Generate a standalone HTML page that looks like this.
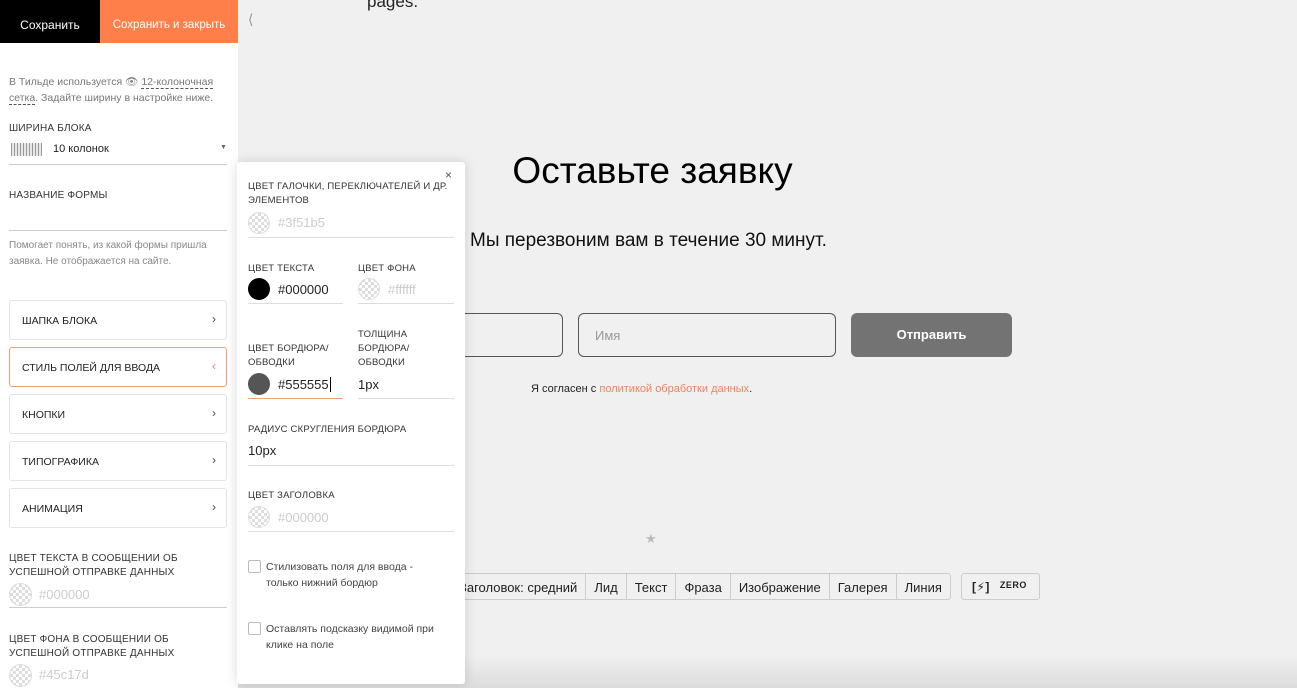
<!DOCTYPE html>
<html><head><meta charset="utf-8"><style>
*{box-sizing:border-box;margin:0;padding:0}
body{width:1297px;height:688px;overflow:hidden;background:#f0f0f0;font-family:"Liberation Sans","DejaVu Sans",sans-serif;position:relative;color:#000}
.a{position:absolute}
.left{position:absolute;left:0;top:0;width:238px;height:688px;background:#fff}
.lbl{font-size:10px;color:#333;letter-spacing:.2px;line-height:14px;text-transform:uppercase}
.chk{display:inline-block;border-radius:50%;background:repeating-conic-gradient(#ddd 0 25%,#fff 0 50%) 0 0/6px 6px;border:1px solid #ddd}
.line{position:absolute;height:1px;background:#ddd}
.menu{position:absolute;left:9px;width:218px;height:40px;border:1px solid #e4e4e4;border-radius:3px;font-size:10.5px;color:#222;padding:14px 12px;text-transform:uppercase}
.menu span{position:absolute;right:10px;top:11px;font-size:12px;color:#444}
.pop{position:absolute;left:237px;top:162px;width:228px;height:522px;background:#fff;border-radius:3px;box-shadow:0 0 12px rgba(0,0,0,.15)}
.val{font-size:13px;color:#222}
.ph{font-size:13px;color:#ccc}
.tb{position:absolute;top:573px;height:27px;border:1px solid #ccc;border-radius:3px;background:#f0f0f0;font-size:13px;color:#222;display:flex}
.tb div{padding:6px 8px;border-right:1px solid #ccc}
.tb div:last-child{border-right:0}
.cb{position:absolute;width:13px;height:13px;border:1px solid #bbb;border-radius:2px}
</style></head><body>
<div class="a" style="left:367px;top:-8px;font-size:17px;color:#222">pages.</div>
<div class="a" style="left:248px;top:11px;font-size:14px;color:#999">⟨</div>
<div class="a" style="left:0;top:0;width:1297px;text-align:center;top:150px;font-size:37px;color:#000;padding-left:8px">Оставьте заявку</div>
<div class="a" style="left:470px;top:230px;font-size:19px;color:#111">Мы перезвоним вам в течение 30 минут.</div>
<div class="a" style="left:440px;top:313px;width:123px;height:44px;border:1px solid #555;border-radius:6px"></div>
<div class="a" style="left:578px;top:313px;width:258px;height:44px;border:1px solid #555;border-radius:6px;font-size:13px;color:#999;padding:14px 16px">Имя</div>
<div class="a" style="left:851px;top:313px;width:161px;height:44px;background:#737373;border-radius:6px;color:#fff;font-weight:bold;font-size:13px;text-align:center;line-height:44px">Отправить</div>
<div class="a" style="left:531px;top:383px;font-size:11px;color:#222">Я согласен с <span style="color:#f0825a">политикой обработки данных</span>.</div>
<div class="a" style="left:645px;top:531px;font-size:13px;color:#bbb">★</div>
<div class="tb" style="left:450px"><div>Заголовок: средний</div><div>Лид</div><div>Текст</div><div>Фраза</div><div>Изображение</div><div>Галерея</div><div>Линия</div></div>
<div class="tb" style="left:961px;width:79px;font-size:9px;font-weight:bold;padding:6px 10px;letter-spacing:.5px"><b style="font-size:12px;margin-right:10px">[⚡]</b>ZERO</div>
<div class="a" style="left:238px;top:655px;width:1059px;height:33px;background:linear-gradient(#f0f0f0,#dcdcdc)"></div>

<div class="left">
<div class="a" style="left:0;top:0;width:100px;height:43px;background:#000;color:#fff;font-size:12px;text-align:center;line-height:50px">Сохранить</div>
<div class="a" style="left:100px;top:0;width:138px;height:43px;background:#ff7f4a;color:#fff;font-size:11.5px;text-align:center;line-height:50px">Сохранить и закрыть</div>
<div class="a" style="left:9px;top:74px;width:220px;font-size:10.5px;color:#777;line-height:16px">В Тильде используется 👁 <span style="border-bottom:1px dashed #555">12-колоночная сетка</span>. Задайте ширину в настройке ниже.</div>
<div class="a lbl" style="left:9px;top:122px">Ширина блока</div>
<div class="a" style="left:11px;top:143px;width:31px;height:13px;background:repeating-linear-gradient(90deg,#999 0 1px,#e8e8e8 1px 3px)"></div>
<div class="a" style="left:53px;top:143px;font-size:11px;color:#222">10 колонок</div>
<div class="a" style="left:220px;top:144px;font-size:7px;color:#666">▼</div>
<div class="line" style="left:9px;top:164px;width:218px;background:#ccc"></div>
<div class="a lbl" style="left:9px;top:189px">Название формы</div>
<div class="line" style="left:9px;top:230px;width:218px;background:#ccc"></div>
<div class="a" style="left:9px;top:238px;width:225px;font-size:10px;color:#888;line-height:16px">Помогает понять, из какой формы пришла заявка. Не отображается на сайте.</div>
<div class="menu" style="top:300px">Шапка блока<span>›</span></div>
<div class="menu" style="top:347px;border-color:#f0a070">Стиль полей для ввода<span style="color:#f08050">‹</span></div>
<div class="menu" style="top:394px">Кнопки<span>›</span></div>
<div class="menu" style="top:441px">Типографика<span>›</span></div>
<div class="menu" style="top:488px">Анимация<span>›</span></div>
<div class="a lbl" style="left:9px;top:552px">Цвет текста в сообщении об<br>успешной отправке данных</div>
<div class="a chk" style="left:9px;top:583px;width:23px;height:23px"></div>
<div class="a ph" style="left:39px;top:587px">#000000</div>
<div class="line" style="left:9px;top:607px;width:218px;background:#ccc"></div>
<div class="a lbl" style="left:9px;top:633px">Цвет фона в сообщении об<br>успешной отправке данных</div>
<div class="a chk" style="left:9px;top:664px;width:23px;height:23px"></div>
<div class="a ph" style="left:39px;top:667px">#45c17d</div>
</div>

<div class="pop">
<div class="a" style="left:208px;top:6px;font-size:12px;color:#555">×</div>
<div class="a lbl" style="left:11px;top:18px;font-size:9.5px">Цвет галочки, переключателей и др.<br>элементов</div>
<div class="a chk" style="left:11px;top:50px;width:22px;height:22px"></div>
<div class="a ph" style="left:41px;top:53px">#3f51b5</div>
<div class="line" style="left:11px;top:75px;width:206px"></div>
<div class="a lbl" style="left:11px;top:100px;font-size:9.5px">Цвет текста</div>
<div class="a" style="left:11px;top:116px;width:22px;height:22px;border-radius:50%;background:#000"></div>
<div class="a val" style="left:41px;top:120px">#000000</div>
<div class="line" style="left:11px;top:141px;width:95px"></div>
<div class="a lbl" style="left:121px;top:100px;font-size:9.5px">Цвет фона</div>
<div class="a chk" style="left:121px;top:116px;width:22px;height:22px"></div>
<div class="a ph" style="left:151px;top:120px">#ffffff</div>
<div class="line" style="left:121px;top:141px;width:96px"></div>
<div class="a lbl" style="left:11px;top:180px;font-size:9.5px">Цвет бордюра/<br>обводки</div>
<div class="a lbl" style="left:121px;top:166px;font-size:9.5px">Толщина<br>бордюра/<br>обводки</div>
<div class="a" style="left:11px;top:211px;width:22px;height:22px;border-radius:50%;background:#555"></div>
<div class="a val" style="left:41px;top:215px">#555555<span style="border-left:1px solid #000;margin-left:1px"></span></div>
<div class="line" style="left:11px;top:236px;width:95px;background:#f0a070"></div>
<div class="a val" style="left:121px;top:215px">1px</div>
<div class="line" style="left:121px;top:236px;width:96px"></div>
<div class="a lbl" style="left:11px;top:261px;font-size:9.5px">Радиус скругления бордюра</div>
<div class="a val" style="left:11px;top:281px">10px</div>
<div class="line" style="left:11px;top:303px;width:206px"></div>
<div class="a lbl" style="left:11px;top:327px;font-size:9.5px">Цвет заголовка</div>
<div class="a chk" style="left:11px;top:344px;width:22px;height:22px"></div>
<div class="a ph" style="left:41px;top:348px">#000000</div>
<div class="line" style="left:11px;top:369px;width:206px"></div>
<div class="cb" style="left:11px;top:398px"></div>
<div class="a" style="left:29px;top:397px;font-size:10.5px;color:#444;line-height:16px;width:190px">Стилизовать поля для ввода -<br>только нижний бордюр</div>
<div class="cb" style="left:11px;top:460px"></div>
<div class="a" style="left:29px;top:459px;font-size:10.5px;color:#444;line-height:16px;width:195px">Оставлять подсказку видимой при<br>клике на поле</div>
</div>
</body></html>
